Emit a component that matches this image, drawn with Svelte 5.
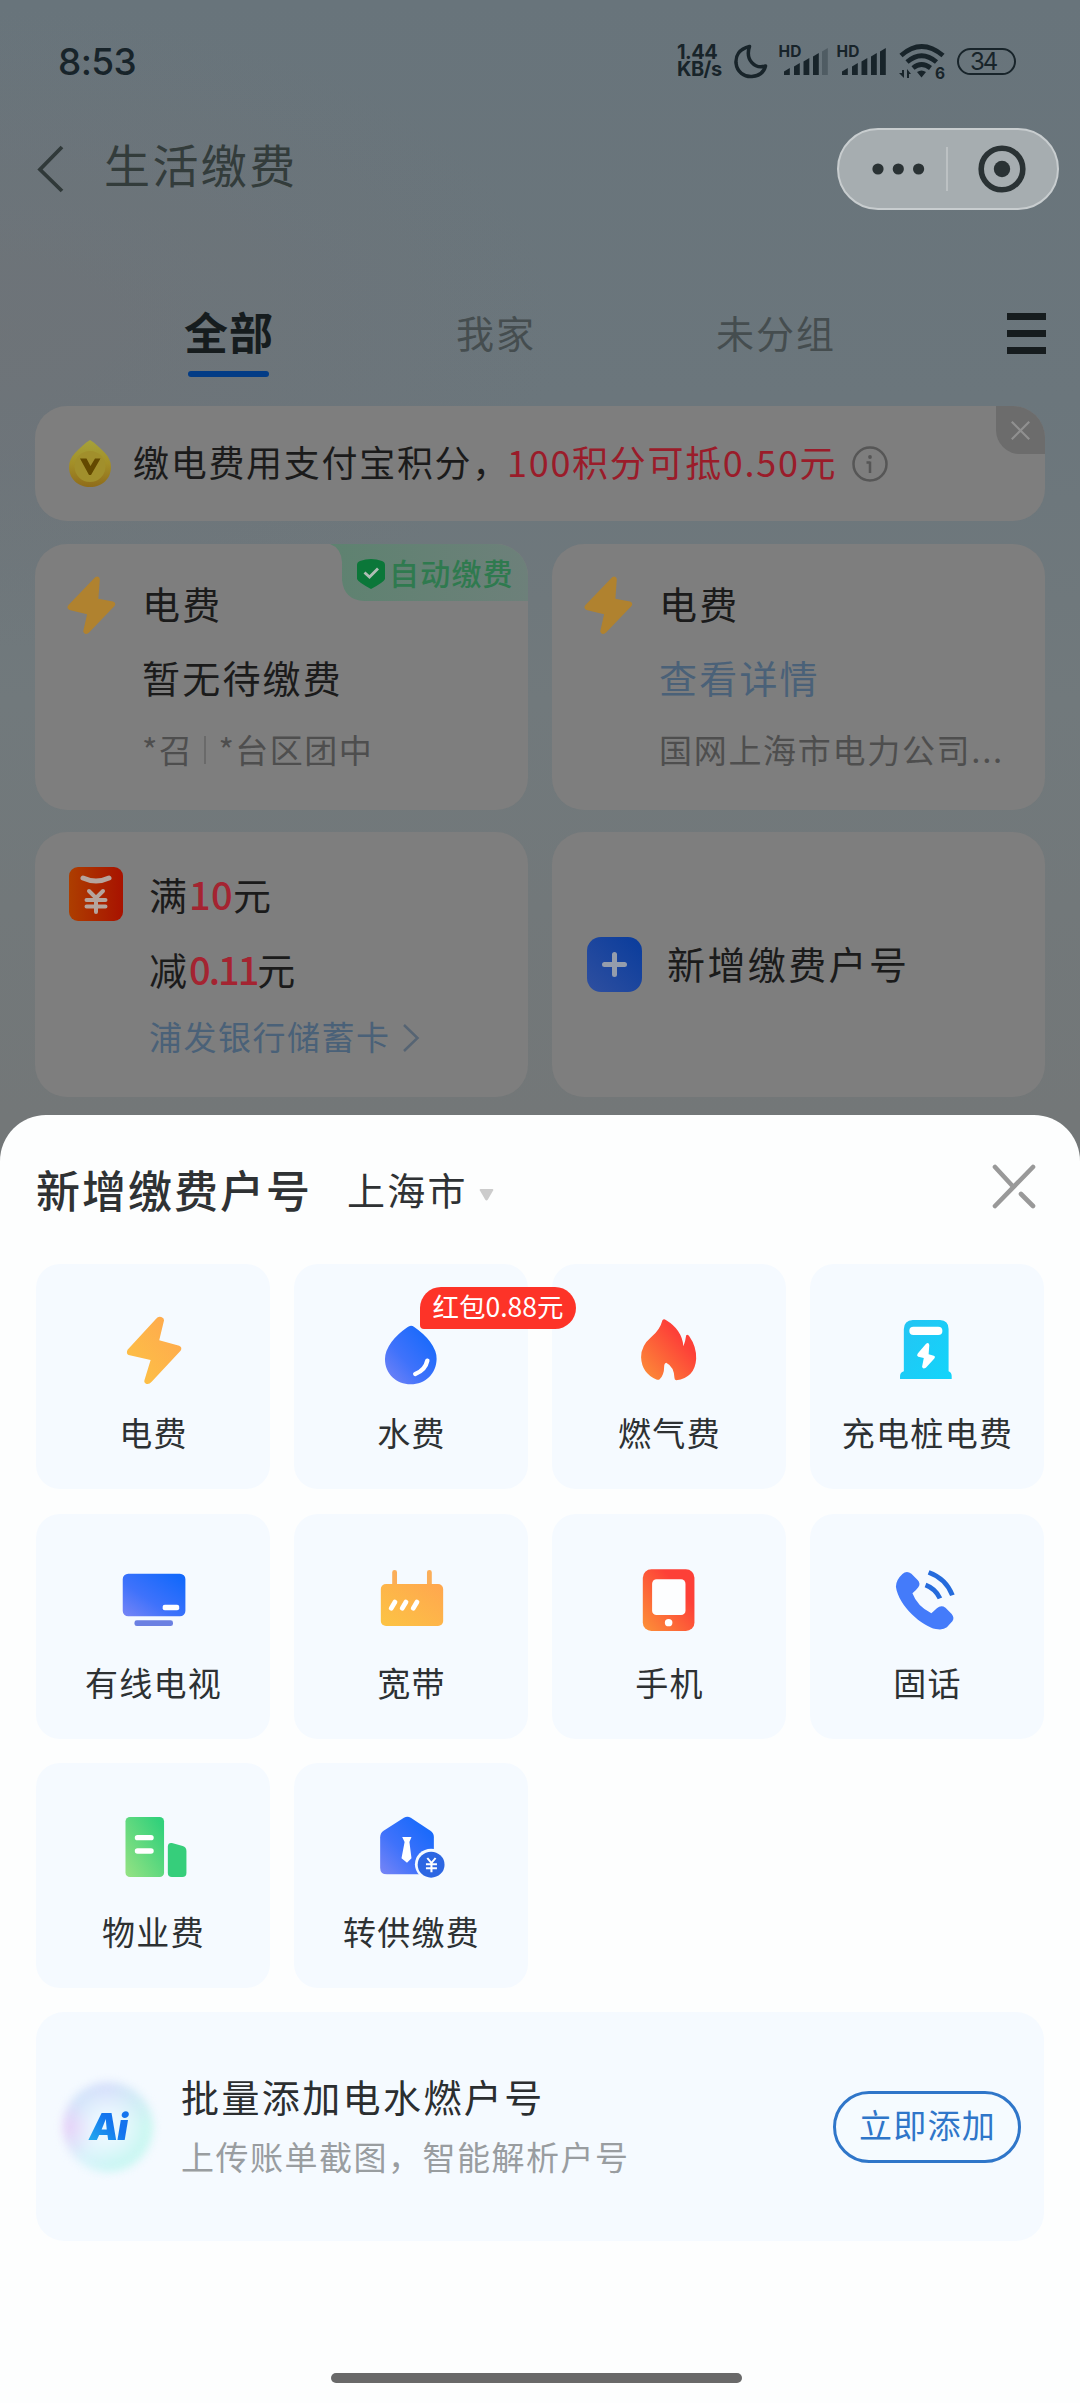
<script>
  const tabs = [
    { label: '我家', cls: 'home' },
    { label: '未分组', cls: 'none' }
  ];
  const tiles = [
    { id: 'bolt', label: '电费', box: '312.2 150 261.4 270' },
    { id: 'drop', label: '水费', box: '1062.9 150 261.4 270', badge: '红包0.88元' },
    { id: 'flame', label: '燃气费', box: '245.4 150 261.4 270' },
    { id: 'charger', label: '充电桩电费', box: '994.6 150 261.4 270' },
    { id: 'tv', label: '有线电视', box: '312.2 150 261.4 270' },
    { id: 'router', label: '宽带', box: '1062.9 150 261.4 270' },
    { id: 'phone', label: '手机', box: '245.4 150 261.4 270' },
    { id: 'call', label: '固话', box: '994.6 150 261.4 270' },
    { id: 'building', label: '物业费', box: '312.2 147 261.4 270' },
    { id: 'house', label: '转供缴费', box: '1062.9 147 261.4 270' }
  ];
  const bars = [
    [5, 27, 7],
    [15, 22, 12],
    [24.5, 17, 17],
    [34, 12, 22],
    [43, 7, 27]
  ];
</script>

{#snippet boltIcon()}
  <svg class="bolt" viewBox="0 0 50 60">
    <path d="M29 1.500Q32.500-.5 33.500 3.500L32 23.500L47 26.500Q50.500 28 48.500 31L22.500 58Q18 61.500 16.500 57L20.500 39.500L2.500 35Q-1 33.500 1.500 30Z" fill="#b0822f" />
  </svg>
{/snippet}

{#snippet signal(weak)}
  <svg class="signal" viewBox="0 0 50 40">
    <text x="-.5" y="16" font-size="15.500" font-weight="700" font-family="Inter" textLength="23">HD</text>
    {#each bars as [x, y, h], i}
      <path d="M{x} {y + 3.5}L{x + 5.8} {y}V{y + h}H{x}Z" opacity={weak && i === 4 ? 0.3 : 1} />
    {/each}
  </svg>
{/snippet}

<svg class="defs" width="0" height="0">
  <defs>
    <linearGradient id="gOrange" x1="1" y1="0" x2="0" y2="1"><stop offset="0" stop-color="#ffa64f" /><stop offset="1" stop-color="#fcc444" /></linearGradient>
    <linearGradient id="gBlue" x1="1" y1="0" x2="0" y2="1"><stop offset=".1" stop-color="#1469fb" /><stop offset=".6" stop-color="#3f72fb" /><stop offset="1" stop-color="#7885f5" /></linearGradient>
    <linearGradient id="gRed" x1="1" y1="0" x2="0" y2="1"><stop offset=".3" stop-color="#fd4038" /><stop offset="1" stop-color="#fc9238" /></linearGradient>
    <linearGradient id="gCyan" x1="0" y1="0" x2="1" y2="1"><stop offset="0" stop-color="#25c4f3" /><stop offset="1" stop-color="#12d5fb" /></linearGradient>
    <linearGradient id="gGreen" x1="1" y1="0" x2="0" y2="1"><stop offset=".1" stop-color="#33d17b" /><stop offset="1" stop-color="#96e283" /></linearGradient>
    <linearGradient id="gCoin" x1="0" y1="0" x2="0" y2="1"><stop offset="0" stop-color="#a5a23a" /><stop offset=".5" stop-color="#a38f28" /><stop offset="1" stop-color="#8f6c1a" /></linearGradient>
    <linearGradient id="gCoupon" x1="0" y1="0" x2="1" y2="0"><stop offset="0" stop-color="#ad3e00" /><stop offset="1" stop-color="#a81200" /></linearGradient>
    <linearGradient id="gPlus" x1="1" y1="0" x2="0" y2="1"><stop offset="0" stop-color="#093c9c" /><stop offset="1" stop-color="#2f4f9f" /></linearGradient>
    <linearGradient id="gAuto" x1="0" y1="0" x2="1" y2="0"><stop offset="0" stop-color="#5e8270" /><stop offset="1" stop-color="#6d807a" /></linearGradient>
  </defs>
</svg>

<div class="screen">
  <div class="status">
    <span class="time">8:53</span>
    <div class="net"><span>1.44</span><span>KB/s</span></div>
    <svg class="moon" viewBox="0 0 34 40">
      <path d="M15.500 5.500C5 8 1.500 15 2 22C3 31 10 36 18 35.500C25 35 30 31 31.500 25C21 28.500 11 19 15.500 5.500Z" fill="none" stroke="#18242a" stroke-width="3.500" stroke-linejoin="round" />
    </svg>
    {@render signal(true)}
    {@render signal(false)}
    <svg class="wifi" viewBox="0 0 46 40">
      <g fill="none" stroke="#18242a" stroke-width="4.800">
        <path d="M2 14.500Q22.500-3.500 44 14.500" />
        <path d="M8 21Q22.500 8.500 37.500 21" />
        <path d="M14 27Q22.500 20 31.500 27" />
      </g>
      <path d="M18 31Q22.500 28 27 31L22.500 36.500ZM3 29H5V37L0 32H3ZM8 37V28L12 33H10V37Z" />
      <text x="36" y="37.500" font-size="15.500" font-weight="700" font-family="Inter">6</text>
    </svg>
    <span class="battery">34</span>
  </div>

  <header>
    <svg class="back" viewBox="0 0 30 50"><path d="M26 3L4 25.500L26 47" fill="none" stroke="#303939" stroke-width="3.800" /></svg>
    <h1>生活缴费</h1>
    <div class="capsule">
      <svg class="dots" viewBox="0 0 54 12"><circle cx="6" cy="6" r="5.600" /><circle cx="26.300" cy="6" r="5.600" /><circle cx="46.600" cy="6" r="5.600" /></svg>
      <i class="split"></i>
      <svg class="target" viewBox="0 0 48 48"><circle cx="24" cy="24" r="20.800" fill="none" stroke="#2a3234" stroke-width="5.600" /><circle cx="24" cy="24" r="8.200" /></svg>
    </div>
  </header>

  <nav>
    <div class="tab active">全部<i></i></div>
    {#each tabs as tab}
      <div class="tab {tab.cls}">{tab.label}</div>
    {/each}
    <div class="menu"><i></i><i></i><i></i></div>
  </nav>

  <section class="notice">
    <svg class="coin" viewBox="0 0 42 48">
      <path d="M21 0C26 3 31 8 36 13C40 17 42 22 42 27C42 39 33 47 21 47S0 39 0 27C0 22 2 17 6 13C11 8 16 3 21 0Z" fill="url(#gCoin)" />
      <circle cx="21" cy="26.500" r="15.500" fill="#a18f2c" />
      <path d="M11 18.500H17.500L21.500 26L26 18.500H31.500L22 35H20Z" fill="#634900" />
    </svg>
    <p>缴电费用支付宝积分，<em>100积分可抵0.50元</em></p>
    <svg class="info" viewBox="0 0 36 36"><circle cx="18" cy="18" r="16.500" fill="none" stroke="#565656" stroke-width="2.500" /><path d="M18 15.500V27M14.500 16.500H18" stroke="#565656" stroke-width="2.500" /><circle cx="18" cy="11" r="1.900" fill="#565656" /></svg>
    <div class="dismiss"><svg viewBox="0 0 20 20"><path d="M.8.8L19.200 19.200M19.200.8L.8 19.200" stroke="#909090" stroke-width="2.300" /></svg></div>
  </section>

  <section class="cards">
    <article class="card">
      {@render boltIcon()}
      <div class="lines">
        <div class="l1">电费</div>
        <div class="l2">暂无待缴费</div>
        <div class="l3"><span>*召</span><i></i><span>*台区团中</span></div>
      </div>
      <div class="auto">
        <svg class="curve" viewBox="0 0 198 57" preserveAspectRatio="none"><path d="M0 0H170Q198 2 198 30V57H34Q14 56 12 36V18Q11 4 0 0Z" fill="url(#gAuto)" /></svg>
        <svg class="shield" viewBox="0 0 28 30"><path d="M3 2Q14-2 25 2Q28 3 28 6V20Q27 23 14 30Q1 23 0 20V6Q0 3 3 2Z" fill="#0b7739" /><path d="M7.500 13.500L12.500 18L21 9.500" fill="none" stroke="#b0bdb5" stroke-width="2.800" /></svg>
        <span>自动缴费</span>
      </div>
    </article>
    <article class="card">
      {@render boltIcon()}
      <div class="lines">
        <div class="l1">电费</div>
        <div class="l2 link">查看详情</div>
        <div class="l3 company">国网上海市电力公司...</div>
      </div>
    </article>
    <article class="card coupon">
      <svg class="sq" viewBox="0 0 54 54">
        <rect width="54" height="54" rx="9" fill="url(#gCoupon)" />
        <path d="M14 11Q27 17 40 11" fill="none" stroke="#b5a49d" stroke-width="5" stroke-linecap="round" />
        <path d="M20 24L27 31L34 24M27 31V45M17.500 33H36.500M17.500 39.500H36.500" fill="none" stroke="#b5a49d" stroke-width="4" stroke-linecap="round" />
      </svg>
      <div class="lines">
        <div class="l1">满<em>10</em>元</div>
        <div class="l2">减<em class="tight">0.11</em>元</div>
        <div class="l3 link">浦发银行储蓄卡<svg class="chev" viewBox="0 0 18 30"><path d="M2 2L15.500 15L2 28" fill="none" stroke="#566473" stroke-width="2.500" /></svg></div>
      </div>
    </article>
    <article class="card add">
      <svg class="sq" viewBox="0 0 55 55"><rect width="55" height="55" rx="14" fill="url(#gPlus)" /><path d="M27.500 17.500V37.500M17.500 27.500H37.500" stroke="#959dac" stroke-width="5" stroke-linecap="round" /></svg>
      <span>新增缴费户号</span>
    </article>
  </section>

  <section class="sheet">
    <div class="sheet-head">
      <h2>新增缴费户号</h2>
      <span class="city">上海市</span>
      <svg class="tri" viewBox="0 0 16 13"><path d="M1.500 0H14.500Q16 .5 15 2L9.500 11.500Q8 13.500 6.500 11.500L1 2Q0 .5 1.500 0Z" fill="#ccc" /></svg>
      <svg class="close" viewBox="0 0 44 46"><path d="M41 3L3 42M3 3L21 22.500M29 30L41 42" fill="none" stroke="#999" stroke-width="4.600" stroke-linecap="round" /></svg>
    </div>

    <div class="tiles">
      {#each tiles as t}
        <div class="tile">
          <svg class="icon" viewBox={t.box} preserveAspectRatio="none">
            {#if t.id === 'bolt'}
              <path d="M452 206Q458 198 467 201Q475 204 475 211L461 271L519 287Q529 292 523 302L439 395Q432 404 424 402Q416 399 418 391L436 330L372 315Q364 310 369 299Z" fill="url(#gOrange)" />
            {:else if t.id === 'drop'}
              <path d="M1183 232Q1193 223 1203 231Q1231 251 1249 275Q1269 303 1268 327C1267 372 1235 403 1193 403S1118 372 1118 327Q1118 303 1137 276Q1155 252 1183 232Z" fill="url(#gBlue)" />
              <path d="M1241 332Q1235 361 1206 372" fill="none" stroke="#fff" stroke-width="13" stroke-linecap="round" />
            {:else if t.id === 'flame'}
              <path d="M357 211Q361 205 367 210Q414 239 418 289Q424 273 426 256Q431 251 435 259Q456 290 455 326Q452 382 397 391Q392 390 392 384Q391 350 368 338Q362 339 362 350Q362 374 349 388Q345 391 338 388Q297 369 295 322Q295 287 324 262Q350 240 357 211Z" fill="url(#gRed)" />
            {:else if t.id === 'charger'}
              <path d="M1084 210H1163Q1188 211 1188 237V364Q1197 368 1197 378V387H1047V378Q1047 368 1058 364V237Q1059 211 1084 210Z" fill="url(#gCyan)" />
              <rect x="1074" y="230" width="96" height="25" rx="12" fill="#fff" />
              <path d="M1122 282Q1130 275 1132 285L1130 313L1145 317Q1151 319 1146 326L1122 353Q1113 359 1111 350L1116 324L1100 320Q1094 318 1099 310Z" fill="#fff" />
            {:else if t.id === 'tv'}
              <rect x="355" y="221" width="182" height="128" rx="16" fill="url(#gBlue)" />
              <rect x="471" y="314" width="48" height="17" rx="6" fill="#fff" />
              <rect x="389" y="361" width="112" height="17" rx="7" fill="#6b80e2" />
            {:else if t.id === 'router'}
              <path d="M1146 217V258M1247 217V258" stroke="#fbae59" stroke-width="14" stroke-linecap="round" />
              <rect x="1106" y="252" width="181" height="126" rx="15" fill="url(#gOrange)" />
              <path d="M1136 325L1147 306M1168 325L1179 306M1200 325L1211 306" stroke="#fff" stroke-width="14" stroke-linecap="round" />
            {:else if t.id === 'phone'}
              <rect x="300" y="208" width="150" height="185" rx="25" fill="url(#gRed)" />
              <rect x="327" y="238" width="97" height="107" rx="13" fill="#fdfeff" />
              <circle cx="375" cy="368" r="11" fill="#fff" />
            {:else if t.id === 'call'}
              <path d="M1054 222Q1066 210 1080 221L1098 240Q1108 251 1100 262Q1093 272 1083 280Q1097 319 1138 340L1154 325Q1166 314 1179 323L1197 342Q1206 354 1199 364L1183 382Q1172 391 1151 387C1112 379 1043 319 1035 260Q1035 240 1054 222Z" fill="#447bfa" />
              <path d="M1130 217Q1181 236 1199 286M1121 255Q1150 266 1163 295" fill="none" stroke="#256bdc" stroke-width="14" />
            {:else if t.id === 'building'}
              <rect x="363" y="201" width="112" height="180" rx="13" fill="url(#gGreen)" />
              <path d="M398 263H437M398 303H437" stroke="#fff" stroke-width="16" stroke-linecap="round" />
              <path d="M498 279L529 288Q540 291 540 303V369Q540 381 528 381H498Q486 381 486 369V289Q487 277 498 279Z" fill="#36ce7b" />
            {:else}
              <path d="M1173 203Q1183 197 1193 203L1250 242Q1260 249 1260 260V373H1124Q1104 373 1104 353V262Q1104 249 1114 242Z" fill="url(#gBlue)" />
              <circle cx="1252" cy="343" r="47" fill="#f5faff" />
              <circle cx="1252" cy="344" r="39" fill="#2c66e2" />
              <path d="M1168 261H1195L1189 276L1195 325L1182 338L1166 325L1175 276Z" fill="#fff" />
              <path d="M1241 324L1253 339L1265 324M1253 339V367M1237 343H1269M1237 355H1269" fill="none" stroke="#fff" stroke-width="6" />
            {/if}
          </svg>
          <span class="label">{t.label}</span>
          {#if t.badge}<span class="badge">{t.badge}</span>{/if}
        </div>
      {/each}
    </div>

    <div class="banner">
      <div class="orb"><span>Ai</span></div>
      <div class="copy">
        <h3>批量添加电水燃户号</h3>
        <p>上传账单截图，智能解析户号</p>
      </div>
      <button>立即添加</button>
    </div>
    <div class="home-bar"></div>
  </section>
</div>

<style>
  :global(body) { margin: 0; background: #71777a; }
  .defs { position: absolute; }
  h1, h2, h3, p { margin: 0; font-weight: 400; }
  em { font-style: normal; }
  svg { display: block; flex: none; }
  .screen {
    width: 1080px; height: 2403px; overflow: hidden; display: flex; flex-direction: column;
    font-family: "Noto Sans CJK SC", "Noto Sans", sans-serif; line-height: 1; white-space: nowrap;
    color: #1b1b1b;
    background:
      radial-gradient(ellipse 560px 320px at 0 330px, #707276a0, transparent),
      linear-gradient(180deg, #68747b 0, #6b767c 400px, #71797c 700px, #737778 1115px);
  }

  .status { height: 122px; flex: none; display: flex; align-items: center; padding: 0 64px 0 58px; box-sizing: border-box; font-family: Inter, sans-serif; color: #18242a; fill: #18242a; }
  .time { font-size: 37px; font-weight: 500; flex: 1; padding-top: 1px; letter-spacing: -.6px; }
  .net { width: 46px; display: flex; flex-direction: column; font-size: 20px; font-weight: 700; line-height: 17px; letter-spacing: -.5px; }
  .net + svg { margin-left: 11px; }
  .moon { width: 34px; height: 40px; }
  .signal { width: 50px; height: 40px; margin-left: 11px; overflow: visible; }
  .signal + .signal { margin-left: 8px; }
  .wifi { width: 46px; height: 40px; margin-left: 12px; overflow: visible; }
  .battery { width: 59px; height: 27px; box-sizing: border-box; border: 2.500px solid #18242a; border-radius: 14px; margin-left: 12px; font-size: 24px; line-height: 23px; padding-left: 11px; letter-spacing: -2px; }

  header { height: 94px; flex: none; display: flex; align-items: center; padding: 0 21px 0 36px; }
  .back { width: 30px; height: 50px; }
  h1 { font-size: 46px; letter-spacing: 2.400px; margin: -12px 0 0 38px; flex: 1; color: #333c3b; }
  .capsule { width: 222px; height: 82px; box-sizing: border-box; border: 2px solid #c8cdcf; border-radius: 41px; background: #a6adb0; display: flex; align-items: center; padding: 0 30px 0 33px; fill: #2a3234; }
  .dots { width: 54px; height: 12px; }
  .split { width: 1.500px; height: 44px; background: #bcc1c3; margin: 0 30px 0 20px; }
  .target { width: 48px; height: 48px; }

  nav { height: 190px; flex: none; box-sizing: border-box; display: flex; align-items: flex-start; padding: 97px 34px 0 184px; }
  .tab { font-size: 38px; letter-spacing: 2px; color: #454d4f; line-height: 38px; }
  .active { font-size: 44px; line-height: 36px; letter-spacing: 1px; font-weight: 700; color: #161c1e; display: flex; flex-direction: column; align-items: center; }
  .active i { width: 81px; height: 6px; border-radius: 3px; background: #033c86; margin: 22px 1px 0 0; }
  .home { margin-left: 182px; }
  .none { margin-left: 180px; flex: 1; }
  .menu { display: flex; flex-direction: column; gap: 10.500px; width: 39px; }
  .menu i { height: 6.500px; background: #161c1e; }

  .notice { position: relative; height: 115px; flex: none; margin: 0 35px; border-radius: 32px; background: #7e7e7e; display: flex; align-items: center; overflow: hidden; }
  .coin { width: 42px; height: 48px; margin-left: 34px; }
  .notice p { font-size: 36px; letter-spacing: 1.700px; margin: -5px 0 0 22px; }
  .notice em { color: #9a1c2a; margin-left: -3px; }
  .info { width: 36px; height: 36px; margin-left: 15px; }
  .dismiss { position: absolute; right: 0; top: 0; width: 49px; height: 48px; border-radius: 0 0 0 24px; background: #6c6c6c; display: flex; align-items: center; justify-content: center; }
  .dismiss svg { width: 19px; height: 19px; }

  .cards { flex: none; display: grid; grid-template-columns: 1fr 1fr; grid-template-rows: 266px 265px; gap: 22px 24px; margin: 23px 35px 0; }
  .card { position: relative; border-radius: 32px; background: #7e7e7e; display: flex; align-items: flex-start; padding-left: 32px; overflow: hidden; }
  .bolt { width: 49px; height: 60px; margin-top: 31px; }
  .lines { margin: 22px 0 0 26px; }
  .l1, .l2 { font-size: 38px; letter-spacing: 2.200px; height: 74px; line-height: 74px; }
  .l3 { font-size: 33px; letter-spacing: 1.500px; height: 70px; line-height: 70px; color: #4e4e4e; display: flex; align-items: center; }
  .l3 i { width: 2px; height: 28px; background: #6a6a6a; margin: 2px 12px 0 11px; }
  .company { letter-spacing: 1.700px; }
  .link { color: #4a6178; }
  .auto { position: absolute; top: 0; right: 0; width: 198px; height: 57px; display: flex; align-items: center; }
  .curve { position: absolute; inset: 0; width: 198px; height: 57px; }
  .shield { position: relative; width: 28px; height: 30px; margin: 2px 0 0 27px; }
  .auto span { position: relative; font-size: 30px; letter-spacing: 1.200px; color: #2f7a4f; margin: -2px 0 0 4px; font-weight: 500; }
  .coupon { padding-left: 34px; }
  .coupon .sq { width: 54px; height: 54px; margin-top: 35px; }
  .coupon .lines { margin: 24px 0 0 26px; }
  .coupon .l1, .coupon .l2 { height: 75px; line-height: 75px; letter-spacing: 2px; }
  .coupon .l3 { height: 60px; line-height: 60px; }
  .coupon em { color: #a42431; letter-spacing: .3px; font-weight: 500; }
  .coupon .tight { letter-spacing: -2px; }
  .chev { width: 18px; height: 30px; margin: 4px 0 0 11px; }
  .add { align-items: center; padding-left: 35px; font-size: 38px; letter-spacing: 2.400px; }
  .add .sq { width: 55px; height: 55px; }
  .add span { margin: -4px 0 0 25px; }

  .sheet { flex: none; height: 1288px; box-sizing: border-box; margin-top: 18px; border-radius: 46px 46px 0 0; background: #fdfefe; padding: 0 36px; display: flex; flex-direction: column; }
  .sheet-head { height: 149px; display: flex; align-items: center; color: #2f3234; }
  h2 { font-size: 44px; letter-spacing: 2px; font-weight: 500; margin-top: -2px; }
  .city { font-size: 38px; letter-spacing: 2.200px; margin: -1px 0 0 35px; }
  .tri { width: 15px; height: 12px; margin: 10px 0 0 11px; }
  .close { width: 44px; height: 46px; margin: -5px 8px 0 auto; }
  .tiles { display: grid; grid-template-columns: repeat(4, 1fr); grid-auto-rows: 225px; gap: 24.500px 24px; }
  .tile { position: relative; border-radius: 24px; background: #f5faff; display: flex; flex-direction: column; align-items: center; padding-top: 36px; box-sizing: border-box; }
  .icon { width: 90px; height: 90px; }
  .label { font-size: 33px; letter-spacing: 1.300px; margin: 26px 0 0 1px; color: #2d3133; }
  .badge { position: absolute; left: 126px; top: 23px; z-index: 1; width: 156px; height: 42px; box-sizing: border-box; border-radius: 21px 21px 21px 4px; background: #fd3328; color: #fff; font-size: 26.500px; line-height: 38px; text-align: center; }
  .banner { height: 229px; margin-top: 24px; border-radius: 28px; background: #f5faff; display: flex; align-items: center; padding: 0 23px 0 26px; }
  .orb { position: relative; z-index: 0; width: 92px; height: 92px; display: flex; align-items: center; justify-content: center; }
  .orb::before { content: ""; position: absolute; inset: 1px; z-index: -1; border-radius: 50%; background: radial-gradient(circle, #ebf8ff 0 20%, transparent 62%), conic-gradient(#d6dffb, #c9f7f0 90deg, #c8f6f3 170deg, #d8f2fb 220deg, #e6d0f8 270deg, #d3e4fa 310deg, #d6dffb); filter: blur(4px); }
  .orb span { font-family: Inter, sans-serif; font-size: 37px; font-weight: 900; font-style: italic; letter-spacing: -1.500px; background: linear-gradient(45deg, #25b4ee, #1474ee 60%); background-clip: text; -webkit-background-clip: text; color: transparent; padding: 0 3px; }
  .copy { flex: 1; margin-left: 27px; color: #2b2e30; }
  h3 { font-size: 38px; letter-spacing: 2.400px; margin-top: -3px; }
  .copy p { font-size: 33px; letter-spacing: 1.500px; color: #999da0; margin-top: 25px; }
  button { width: 188px; height: 72px; box-sizing: border-box; border: 3px solid #2f76c9; border-radius: 36px; background: #f5fbff; color: #2f76c9; font: inherit; font-size: 33px; letter-spacing: 1.300px; line-height: 1; padding: 0 0 4px 1px; text-align: center; }
  .home-bar { width: 411px; height: 10px; border-radius: 5px; background: #696969; margin: 132px 0 0 295px; }
</style>
